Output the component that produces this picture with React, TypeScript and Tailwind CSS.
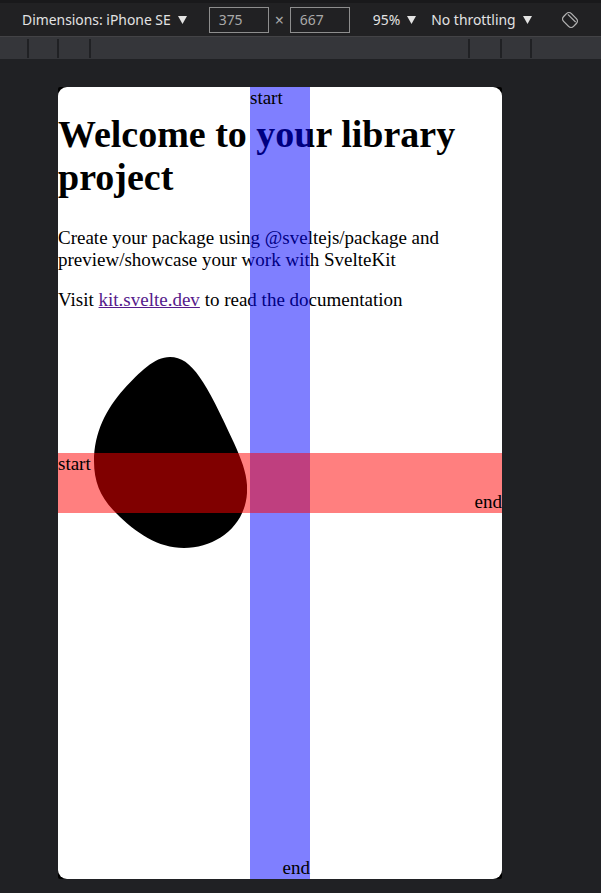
import React from 'react';

function Caret() {
  return (
    <svg width="9" height="8" viewBox="0 0 9 8" className="shrink-0">
      <path d="M0 0 H9 L4.5 8 Z" fill="#e3e3e3" />
    </svg>
  );
}

function RotateIcon() {
  return (
    <svg width="20" height="20" viewBox="0 0 20 20" className="shrink-0">
      <g transform="rotate(-45 10 10)" fill="none" stroke="#b4b4b4" strokeWidth="1.3">
        <rect x="4.5" y="3" width="11" height="14" rx="3.5" />
        <line x1="12.5" y1="4.5" x2="12.5" y2="15.5" />
      </g>
    </svg>
  );
}

function SizeBox({ value }: { value: string }) {
  return (
    <div className="w-[60px] h-[26px] border border-[#8e8e8e] flex items-center pl-[9px] text-[#a9a9a9]">
      {value}
    </div>
  );
}

function Toolbar() {
  return (
    <div className="h-[33px] pt-[1px] bg-[#212123] flex items-center pl-[22px] text-[13.9px] text-[#e3e3e3] font-['Noto_Sans',sans-serif]">
      <span>Dimensions: iPhone SE</span>
      <span className="ml-[7px]"><Caret /></span>
      <div className="ml-[22px]"><SizeBox value="375" /></div>
      <span className="mx-[6px] text-[#a9a9a9] text-[16px]">×</span>
      <SizeBox value="667" />
      <span className="ml-[23px]">95%</span>
      <span className="ml-[7px]"><Caret /></span>
      <span className="ml-[15px]">No throttling</span>
      <span className="ml-[7px]"><Caret /></span>
      <span className="ml-[28px]"><RotateIcon /></span>
    </div>
  );
}

function Ruler() {
  const Divider = () => <div className="w-[2px] h-[19px] bg-[#202124]" />;
  return (
    <div className="h-[22px] bg-[#35363a] flex items-center">
      <div className="w-[27px]" />
      <Divider />
      <div className="w-[28px]" />
      <Divider />
      <div className="w-[30px]" />
      <Divider />
      <div className="w-[377px]" />
      <Divider />
      <div className="w-[30px]" />
      <Divider />
      <div className="w-[28px]" />
      <Divider />
    </div>
  );
}

function Blob() {
  return (
    <svg width="153" height="191" viewBox="0 0 153 191" className="block mt-[46px] ml-[36px]">
      <path
        d="M76 0 C98 0 112 25 140 86 C149 106 154 120 153 136 C151 170 121 191 90 191 C64 191 42 176 22 156 C7 141 0 126 0 104 C0 76 12 52 30 32 C46 15 60 0 76 0 Z"
        fill="#000"
      />
    </svg>
  );
}

function Preview() {
  return (
    <div className="w-[444px] h-[792px] bg-black rounded-[2px]">
      <div className="relative w-full h-full bg-white rounded-[9px] overflow-hidden font-['Liberation_Serif',serif] text-[19px] leading-[22px] text-black">
        <h1 className="mt-[26px] text-[38px] leading-[43px] font-bold">Welcome to your library project</h1>
        <p className="mt-[28px]">
          Create your package using @sveltejs/package and preview/showcase your work with SvelteKit
        </p>
        <p className="mt-[18px]">
          Visit <a className="text-[#551a8b] underline">kit.svelte.dev</a> to read the documentation
        </p>
        <Blob />

        <div className="absolute top-0 bottom-0 left-[192px] w-[60px] bg-[rgba(0,0,255,0.5)] flex flex-col justify-between">
          <span className="self-start">start</span>
          <span className="self-end">end</span>
        </div>
        <div className="absolute left-0 right-0 top-[366px] h-[60px] bg-[rgba(255,0,0,0.5)] flex flex-col justify-between">
          <span className="self-start">start</span>
          <span className="self-end">end</span>
        </div>
      </div>
    </div>
  );
}

export default function App() {
  return (
    <div className="w-[601px] h-[893px] bg-[#202124] flex flex-col overflow-hidden">
      <div className="h-[3px] bg-[#19191b]" />
      <Toolbar />
      <div className="h-px bg-[#434346]" />
      <Ruler />
      <div className="flex-1 pt-[28px] pl-[58px]">
        <Preview />
      </div>
    </div>
  );
}
